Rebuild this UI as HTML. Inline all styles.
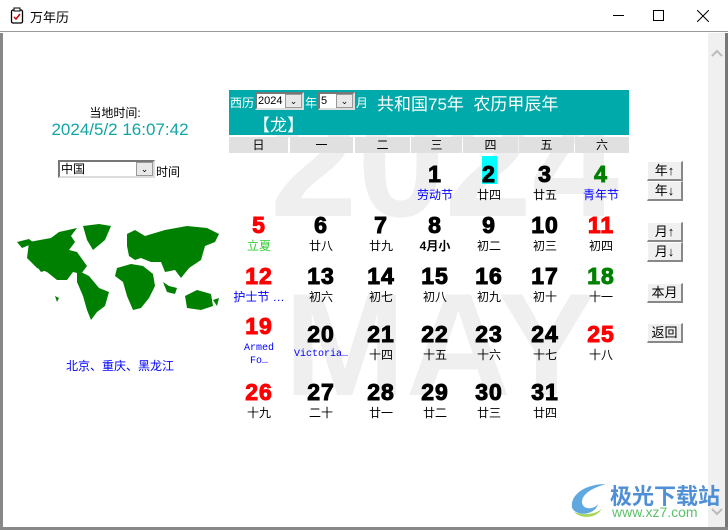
<!DOCTYPE html>
<html><head><meta charset="utf-8"><style>
*{margin:0;padding:0;box-sizing:border-box}
body{width:728px;height:530px;position:relative;overflow:hidden;background:#fff;font-family:"Liberation Sans","Noto Sans CJK SC",sans-serif;font-size:12px}
.a{position:absolute}
.title{left:0;top:0;width:728px;height:32px;background:#fff;border-bottom:1px solid #999}
.wm{color:#efefef;font-weight:bold;font-family:"Liberation Sans",sans-serif;white-space:nowrap}
.hdr{left:229px;top:90px;width:400px;height:45px;background:#00aaaa;color:#fff}
.wd{top:137px;height:16px;background:#e0e0e0;text-align:center;font-size:12px;line-height:16px;color:#000}
.n{width:60px;text-align:center;font-weight:bold;font-size:23px;font-family:"Liberation Sans",sans-serif;line-height:26px;margin-left:-30px;-webkit-text-stroke:1px currentColor;letter-spacing:1px}
.s{width:80px;text-align:center;font-size:12px;margin-left:-40px;line-height:14px}
.btn{left:647px;width:36px;height:20px;background:#f0f0f0;border-right:2px solid #888;border-bottom:2px solid #888;border-top:1px solid #fff;border-left:1px solid #fff;text-align:center;font-size:13px;line-height:18px}
.sel{background:#fff;border:2px solid;border-color:#777 #ddd #ddd #777;height:18px;font-size:11px;color:#000;line-height:14px;padding-left:1px}
.dd{position:absolute;right:0;top:0;width:17px;height:14px;background:#e8e8e8;border:1px solid #999;font-size:9px;text-align:center;line-height:12px}
</style></head><body>
<div class="a title">
<svg class="a" style="left:10px;top:7px" width="14" height="18"><rect x="1.5" y="3" width="11" height="13" rx="1.5" fill="none" stroke="#000" stroke-width="1.3"/><rect x="4" y="1" width="6" height="3" fill="#fff" stroke="#000"/><path d="M4 10l2 2 4-5" stroke="#c00" stroke-width="1.5" fill="none"/></svg>
<div class="a" style="left:30px;top:7px;font-size:13px">万年历</div>
<div class="a" style="left:613px;top:15px;width:11px;height:1px;background:#000"></div>
<div class="a" style="left:653px;top:10px;width:11px;height:11px;border:1px solid #000"></div>
<svg class="a" style="left:697px;top:10px" width="12" height="12"><path d="M0 0L12 12M12 0L0 12" stroke="#000"/></svg>
</div>
<div class="a" style="left:0;top:33px;width:3px;height:497px;background:#888"></div>
<div class="a" style="left:0;top:527px;width:728px;height:3px;background:#888"></div>
<div class="a" style="left:708px;top:33px;width:17px;height:494px;background:#f0f0f0"></div>
<div class="a" style="left:725px;top:33px;width:3px;height:494px;background:#777"></div>
<svg class="a" style="left:711px;top:49px" width="12" height="8"><path d="M1 7L6 2 11 7" stroke="#bbb" stroke-width="2" fill="none"/></svg>
<svg class="a" style="left:711px;top:508px" width="12" height="8"><path d="M1 1L6 6 11 1" stroke="#bbb" stroke-width="2" fill="none"/></svg>

<div class="a wm" style="left:270px;top:84px;font-size:157px;line-height:157px">2024</div>
<div class="a wm" style="left:284px;top:272px;font-size:146px;line-height:146px">MAY</div>

<div class="a" style="left:40px;top:104px;width:150px;text-align:center;font-size:12px">当地时间:</div>
<div class="a" style="left:30px;top:120px;width:180px;text-align:center;font-size:17px;color:#12a5a5">2024/5/2 16:07:42</div>
<div class="a sel" style="left:58px;top:160px;width:97px;font-size:12px">中国<div class="dd">⌄</div></div>
<div class="a" style="left:156px;top:163px;font-size:12px">时间</div>
<svg class="a" style="left:15px;top:220px" width="210" height="105" viewBox="0 0 210 105">
<g fill="#008000">
<path d="M2 22l12-3 5 4-12 5z"/>
<path d="M14 22l22-4 8-6 18-4-6 8 4 6-6 8 8 2 10 14-6 8-8-2-6 8-10 0-10-8-10-4-10-10z"/>
<path d="M68 6l16-2 12 2-6 14-12 10-6-10z"/>
<path d="M62 50l12 6 10 12 10 4-4 14-8 6-6 8-4-10-4-14-6-14z"/>
<path d="M112 14l8-4 10 6 20-6 22-4 20 2 12 6-4 8-10 4-4 14-12 8-8 10-6-8-10 2-4-10-10 0-10-4-6 2-6-4-2-10z"/>
<path d="M102 48l14-4 12 2 10 8 2 12-6 12-8 10-8 2-6-14-4-14-8-6z"/>
<path d="M148 62l6 4 8 2-2 6-8-2z"/>
<path d="M170 76l12-6 14 4 2 12-12 4-14-2z"/>
<path d="M198 80l6-2-2 8z"/>
<path d="M20 44l4 0 8 6-6 2z"/>
<path d="M40 76l4 2-2 4z"/>
</g></svg>
<div class="a" style="left:40px;top:357px;width:160px;text-align:center;font-size:12px;color:#0000ff">北京、重庆、黑龙江</div>

<div class="a hdr">
<div class="a" style="left:1px;top:4px;font-size:12px">西历</div>
<div class="a sel" style="left:26px;top:2px;width:49px">2024<div class="dd">⌄</div></div>
<div class="a" style="left:76px;top:4px;font-size:12px">年</div>
<div class="a sel" style="left:89px;top:2px;width:37px">5<div class="dd">⌄</div></div>
<div class="a" style="left:127px;top:4px;font-size:12px">月</div>
<div class="a" style="left:148px;top:0;font-size:17px;white-space:nowrap">共和国75年&nbsp; 农历甲辰年</div>
<div class="a" style="left:24px;top:21px;font-size:17px">【龙】</div>
</div>
<div class="a wd" style="left:229px;width:59px">日</div>
<div class="a wd" style="left:290px;width:63px">一</div>
<div class="a wd" style="left:355px;width:55px">二</div>
<div class="a wd" style="left:411px;width:51px">三</div>
<div class="a wd" style="left:463px;width:55px">四</div>
<div class="a wd" style="left:519px;width:55px">五</div>
<div class="a wd" style="left:575px;width:54px">六</div>

<div class="a" style="left:482px;top:156px;width:15px;height:28px;background:#00ffff"></div>
<div class="a n" style="left:435px;top:161px">1</div><div class="a s" style="left:435px;top:188px;color:#00f">劳动节</div>
<div class="a n" style="left:489px;top:161px">2</div><div class="a s" style="left:489px;top:188px">廿四</div>
<div class="a n" style="left:545px;top:161px">3</div><div class="a s" style="left:545px;top:188px">廿五</div>
<div class="a n" style="left:601px;top:161px;color:#008000">4</div><div class="a s" style="left:601px;top:188px;color:#00f">青年节</div>
<div class="a n" style="left:259px;top:212px;color:#f00">5</div><div class="a s" style="left:259px;top:239px;color:#3c3">立夏</div>
<div class="a n" style="left:321px;top:212px">6</div><div class="a s" style="left:321px;top:239px">廿八</div>
<div class="a n" style="left:381px;top:212px">7</div><div class="a s" style="left:381px;top:239px">廿九</div>
<div class="a n" style="left:435px;top:212px">8</div><div class="a s" style="left:435px;top:239px;font-weight:bold">4月小</div>
<div class="a n" style="left:489px;top:212px">9</div><div class="a s" style="left:489px;top:239px">初二</div>
<div class="a n" style="left:545px;top:212px">10</div><div class="a s" style="left:545px;top:239px">初三</div>
<div class="a n" style="left:601px;top:212px;color:#f00">11</div><div class="a s" style="left:601px;top:239px">初四</div>
<div class="a n" style="left:259px;top:263px;color:#f00">12</div><div class="a s" style="left:259px;top:290px;color:#00f">护士节 …</div>
<div class="a n" style="left:321px;top:263px">13</div><div class="a s" style="left:321px;top:290px">初六</div>
<div class="a n" style="left:381px;top:263px">14</div><div class="a s" style="left:381px;top:290px">初七</div>
<div class="a n" style="left:435px;top:263px">15</div><div class="a s" style="left:435px;top:290px">初八</div>
<div class="a n" style="left:489px;top:263px">16</div><div class="a s" style="left:489px;top:290px">初九</div>
<div class="a n" style="left:545px;top:263px">17</div><div class="a s" style="left:545px;top:290px">初十</div>
<div class="a n" style="left:601px;top:263px;color:#008000">18</div><div class="a s" style="left:601px;top:290px">十一</div>
<div class="a n" style="left:259px;top:313px;color:#f00">19</div><div class="a s" style="left:259px;top:342px;color:#00f;font-family:'Liberation Mono',monospace;font-size:10px;line-height:13px">Armed<br>Fo…</div>
<div class="a n" style="left:321px;top:321px">20</div><div class="a s" style="left:321px;top:348px;color:#00f;font-family:'Liberation Mono',monospace;font-size:10px">Victoria…</div>
<div class="a n" style="left:381px;top:321px">21</div><div class="a s" style="left:381px;top:348px">十四</div>
<div class="a n" style="left:435px;top:321px">22</div><div class="a s" style="left:435px;top:348px">十五</div>
<div class="a n" style="left:489px;top:321px">23</div><div class="a s" style="left:489px;top:348px">十六</div>
<div class="a n" style="left:545px;top:321px">24</div><div class="a s" style="left:545px;top:348px">十七</div>
<div class="a n" style="left:601px;top:321px;color:#f00">25</div><div class="a s" style="left:601px;top:348px">十八</div>
<div class="a n" style="left:259px;top:379px;color:#f00">26</div><div class="a s" style="left:259px;top:406px">十九</div>
<div class="a n" style="left:321px;top:379px">27</div><div class="a s" style="left:321px;top:406px">二十</div>
<div class="a n" style="left:381px;top:379px">28</div><div class="a s" style="left:381px;top:406px">廿一</div>
<div class="a n" style="left:435px;top:379px">29</div><div class="a s" style="left:435px;top:406px">廿二</div>
<div class="a n" style="left:489px;top:379px">30</div><div class="a s" style="left:489px;top:406px">廿三</div>
<div class="a n" style="left:545px;top:379px">31</div><div class="a s" style="left:545px;top:406px">廿四</div>

<div class="a btn" style="top:161px">年↑</div>
<div class="a btn" style="top:181px">年↓</div>
<div class="a btn" style="top:222px">月↑</div>
<div class="a btn" style="top:242px">月↓</div>
<div class="a btn" style="top:283px">本月</div>
<div class="a btn" style="top:323px">返回</div>

<svg class="a" style="left:568px;top:480px" width="40" height="40"><path d="M4 28C2 14 18 4 38 4 24 8 14 14 14 22 14 30 26 30 30 24 28 34 10 38 4 28z" fill="#5fa8e0"/><path d="M6 32C14 40 30 38 34 28 30 34 16 36 6 32z" fill="#a6d65a"/></svg>
<div class="a" style="left:610px;top:479px;font-size:22px;font-weight:bold;color:#4f8fd6">极光下载站</div>
<div class="a" style="left:612px;top:504px;font-size:14px;color:#5cc26a">www.xz7.com</div>
</body></html>
